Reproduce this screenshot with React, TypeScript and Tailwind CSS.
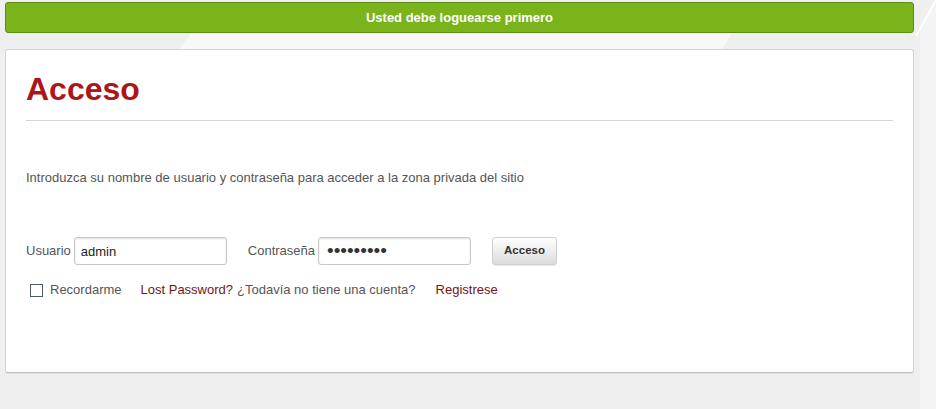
import React from "react";

export default function App() {
  const font = { fontFamily: '"Liberation Sans", Arial, sans-serif' };
  return (
    <div
      className="relative w-full h-[409px] overflow-hidden bg-[#efefef]"
      style={font}
    >
      <svg
        className="absolute inset-0 pointer-events-none"
        width="936"
        height="409"
        viewBox="0 0 936 409"
      >
        <polygon points="200,20 740,20 722,49 180,49" fill="#f8f8f8" />
        <polygon points="936,0 936,409 920,409 920,30" fill="#f4f4f4" />
        <line x1="936" y1="0" x2="916" y2="36" stroke="#ffffff" strokeWidth="2" />
      </svg>

      <div className="relative flex flex-col pl-[5px] pr-[22px] pt-[2px]">
        <div className="h-[31px] flex items-center justify-center rounded-[3px] border border-[#5d8c15] bg-[#7bb31b] text-white text-[13px] font-bold">
          Usted debe loguearse primero
        </div>

        <div className="mt-[16px] h-[324px] rounded-[3px] border border-[#d4d4d4] border-b-[#bdbdbd] bg-white px-[20px] pt-[23px] shadow-[0_1px_1px_rgba(0,0,0,0.06)]">
          <h1 className="text-[32px] leading-[32px] font-bold text-[#ac1616]">
            Acceso
          </h1>
          <div className="mt-[15px] h-px bg-[#d6d6d6]" />

          <p className="mt-[49px] text-[13px] leading-[16px] text-[#555555]">
            Introduzca su nombre de usuario y contraseña para acceder a la zona privada del sitio
          </p>

          <div className="mt-[51px] flex items-center text-[13px] text-[#555555]">
            <span>Usuario</span>
            <input
              readOnly
              defaultValue="admin"
              className="ml-[3px] h-[28px] w-[153px] rounded-[3px] border border-[#c6c6c6] bg-white px-[6px] text-[13px] text-[#222222] outline-none shadow-[inset_0_1px_2px_rgba(0,0,0,0.12)]"
              style={font}
            />
            <span className="ml-[21px]">Contraseña</span>
            <input
              readOnly
              type="password"
              defaultValue="123456789"
              className="ml-[3px] h-[28px] w-[153px] rounded-[3px] border border-[#c6c6c6] bg-white pl-[8px] pr-[6px] text-[19px] leading-none tracking-[0px] text-[#333333] outline-none shadow-[inset_0_1px_2px_rgba(0,0,0,0.12)]"
              style={font}
            />
            <button
              type="button"
              className="ml-[21px] h-[28px] w-[65px] rounded-[3px] border border-[#cfcfcf] bg-gradient-to-b from-[#ffffff] to-[#dcdcdc] text-[11.5px] font-bold text-[#333333] shadow-[0_1px_1px_rgba(0,0,0,0.08)]"
              style={font}
            >
              Acceso
            </button>
          </div>

          <div className="mt-[17px] flex items-center text-[13px] leading-[16px] text-[#555555]">
            <span className="ml-[4px] h-[13px] w-[13px] border border-[#4b5a6b] bg-white" />
            <span className="ml-[7px]">Recordarme</span>
            <a className="ml-[19px] text-[#741414]">Lost Password?</a>
            <span className="ml-[4px]">¿Todavía no tiene una cuenta?</span>
            <a className="ml-[20px] text-[#741414]">Registrese</a>
          </div>
        </div>
      </div>
    </div>
  );
}
